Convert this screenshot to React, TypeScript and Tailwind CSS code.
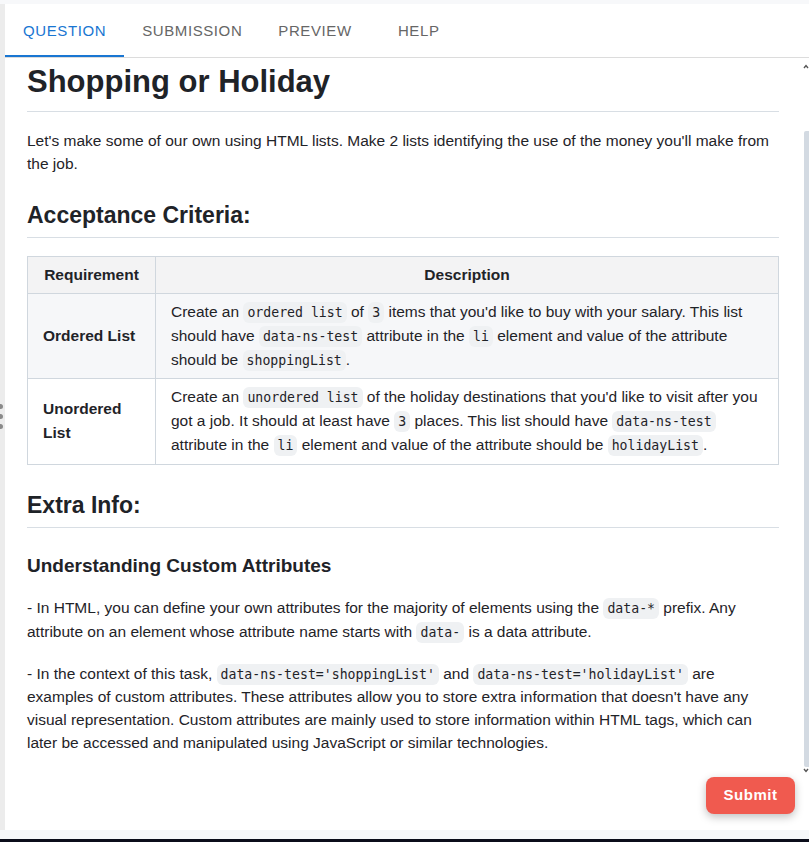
import React from "react";

const Code = ({ children }: { children: React.ReactNode }) => (
  <code className="font-['DejaVu_Sans_Mono',monospace] text-[13.2px] leading-none bg-[#eff1f3] rounded-[6px] px-[4px] py-[3px] text-[#1f2328]">
    {children}
  </code>
);

const tabs = ["QUESTION", "SUBMISSION", "PREVIEW", "HELP"];

export default function App() {
  return (
    <div className="h-[842px] w-[809px] flex flex-col bg-[#f7f8fa] font-['Liberation_Sans',Arial,sans-serif] text-[#1f2328] overflow-hidden">
      <div className="h-[4px] shrink-0" />
      <div className="flex flex-1 min-h-0">
        {/* left drag handle strip */}
        <div className="w-[5px] shrink-0 bg-[#ececec] relative">
          <div className="absolute left-[-2px] top-[400px] flex flex-col gap-[5px]">
            <span className="w-[5px] h-[5px] rounded-full bg-[#8a8a8a]" />
            <span className="w-[5px] h-[5px] rounded-full bg-[#8a8a8a]" />
            <span className="w-[5px] h-[5px] rounded-full bg-[#8a8a8a]" />
          </div>
        </div>

        <div className="flex-1 bg-white flex flex-col relative min-w-0">
          {/* tabs */}
          <div className="h-[54px] shrink-0 flex border-b border-[#dcdcdc]">
            {tabs.map((t, i) => (
              <div
                key={t}
                className={
                  i === 0
                    ? "h-full flex items-center px-[18px] text-[15px] tracking-[0.6px] text-[#1976d2] border-b-2 border-[#1976d2] pt-[4px]"
                    : i === 3
                    ? "h-full flex items-center justify-center w-[98px] text-[15px] tracking-[0.6px] text-[#666666] pt-[2px]"
                    : "h-full flex items-center px-[18px] text-[15px] tracking-[0.6px] text-[#666666] pt-[2px]"
                }
              >
                {t}
              </div>
            ))}
          </div>

          {/* content + scrollbar */}
          <div className="flex flex-1 min-h-0">
            <div className="flex-1 min-w-0 overflow-hidden pl-[22px] pr-[24px] pt-[5px] text-[15.5px] leading-[1.5]">
              <h1 className="text-[31px] font-bold leading-[1.25] pb-[9px] border-b border-[#d8dee4] mb-[17px]">
                Shopping or Holiday
              </h1>
              <p className="mb-[17px]">
                Let's make some of our own using HTML lists. Make 2 lists identifying the use of the money you'll make
                from the job.
              </p>
              <h2 className="text-[23px] font-bold leading-[1.25] mt-[26px] pb-[7px] border-b border-[#d8dee4] mb-[18px]">
                Acceptance Criteria:
              </h2>
              <table className="w-full border-collapse">
                <thead>
                  <tr className="bg-[#f3f3f4]">
                    <th className="w-[128px] border border-[#d0d7de] py-[6px] px-[13px] font-bold text-center leading-[24px]">
                      Requirement
                    </th>
                    <th className="border border-[#d0d7de] py-[6px] px-[13px] font-bold text-center leading-[24px]">
                      Description
                    </th>
                  </tr>
                </thead>
                <tbody>
                  <tr className="bg-[#f6f7f9]">
                    <td className="border border-[#d0d7de] py-[6px] px-[15px] font-bold leading-[24px]">Ordered List</td>
                    <td className="border border-[#d0d7de] py-[6px] px-[15px] leading-[24px]">
                      Create an <Code>ordered list</Code> of <Code>3</Code> items that you'd like to buy with your
                      salary. This list should have <Code>data-ns-test</Code> attribute in the <Code>li</Code> element
                      and value of the attribute should be <Code>shoppingList</Code>.
                    </td>
                  </tr>
                  <tr className="bg-white">
                    <td className="border border-[#d0d7de] pt-[6px] pb-[7px] px-[15px] font-bold leading-[24px]">
                      Unordered List
                    </td>
                    <td className="border border-[#d0d7de] pt-[6px] pb-[7px] px-[15px] leading-[24px]">
                      Create an <Code>unordered list</Code> of the holiday destinations that you'd like to visit after
                      you got a job. It should at least have <Code>3</Code> places. This list should have{" "}
                      <Code>data-ns-test</Code> attribute in the <Code>li</Code> element and value of the attribute
                      should be <Code>holidayList</Code>.
                    </td>
                  </tr>
                </tbody>
              </table>
              <h2 className="text-[23px] font-bold leading-[1.25] mt-[26px] pb-[7px] border-b border-[#d8dee4] mb-[16px]">
                Extra Info:
              </h2>
              <h3 className="text-[19px] font-bold leading-[1.25] mt-[26px] mb-[18px]">
                Understanding Custom Attributes
              </h3>
              <p className="mb-[18px] leading-[24px]">
                - In HTML, you can define your own attributes for the majority of elements using the{" "}
                <Code>data-*</Code> prefix. Any attribute on an element whose attribute name starts with{" "}
                <Code>data-</Code> is a data attribute.
              </p>
              <p className="mb-[16px] leading-[23px]">
                - In the context of this task, <Code>data-ns-test='shoppingList'</Code> and{" "}
                <Code>data-ns-test='holidayList'</Code> are examples of custom attributes. These attributes allow you
                to store extra information that doesn't have any visual representation. Custom attributes are mainly
                used to store information within HTML tags, which can later be accessed and manipulated using
                JavaScript or similar technologies.
              </p>
            </div>

            {/* scrollbar */}
            <div className="w-[6px] shrink-0 flex flex-col items-center pt-[6px]">
              <svg width="6" height="5" viewBox="0 0 6 5" className="shrink-0">
                <path d="M1 4 L3 1.5 L5 4" stroke="#555" strokeWidth="1.4" fill="none" />
              </svg>
              <div className="mt-[62px] w-[5px] h-[636px] bg-[#d3dae2] rounded-l-[2px] self-end" />
              <svg width="6" height="5" viewBox="0 0 6 5" className="shrink-0 mt-[1px]">
                <path d="M1 1 L3 3.5 L5 1" stroke="#555" strokeWidth="1.4" fill="none" />
              </svg>
            </div>
          </div>

          <button className="absolute right-[14px] bottom-[16px] w-[89px] h-[37px] rounded-[8px] bg-[#f05a4f] text-white text-[15px] font-bold tracking-[0.5px] shadow-[0_3px_8px_rgba(0,0,0,0.25)]">
            Submit
          </button>
        </div>
      </div>
      <div className="h-[9px] shrink-0 bg-[#f6f8fa]" />
      <div className="h-[3px] shrink-0 bg-[#0b0d1a]" />
    </div>
  );
}
